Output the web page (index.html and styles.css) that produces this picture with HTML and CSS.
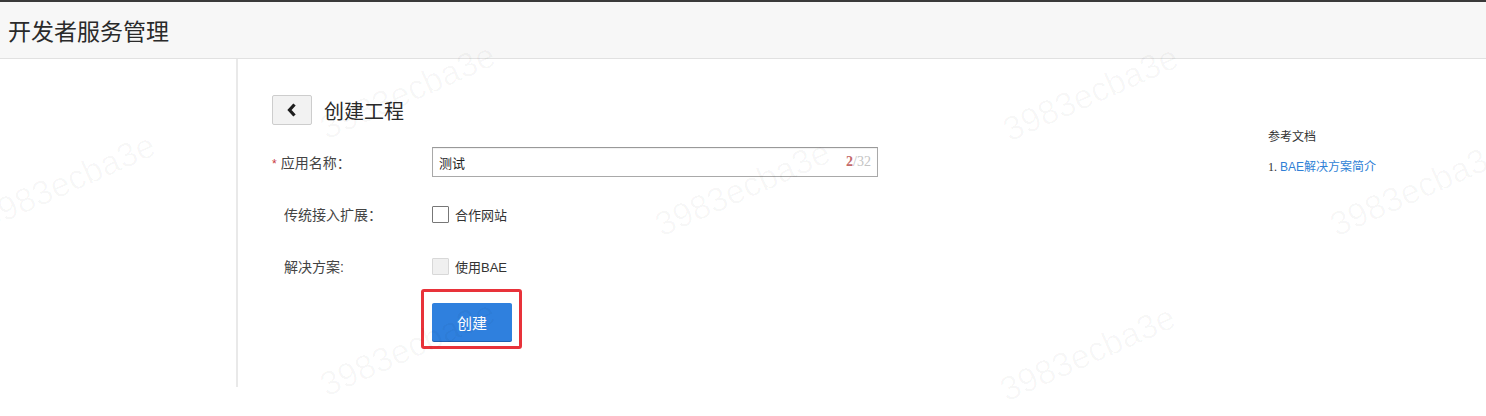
FILE: index.html
```html
<!DOCTYPE html>
<html>
<head>
  <meta charset="UTF-8">
  <title>开发者服务管理</title>
  <link rel="stylesheet" href="styles.css">
</head>
<body>
  <div class="topbar">
    <h1>开发者服务管理</h1>
  </div>

  <div class="main">
    <div class="sidebar"></div>

    <div class="content">
      <div class="page-title">
        <button class="back-btn" type="button">
          <svg width="10" height="14" viewBox="0 0 10 14"><polyline points="7.5,1.5 2.5,7 7.5,12.5" fill="none" stroke="#1e1e1e" stroke-width="3.2"/></svg>
        </button>
        <h2>创建工程</h2>
      </div>

      <div class="form">
        <div class="row">
          <label class="label"><span class="req">*</span>应用名称：</label>
          <div class="field">
            <div class="input">
              <span>测试</span>
              <span class="count"><em>2</em>/32</span>
            </div>
          </div>
        </div>

        <div class="row">
          <label class="label indent">传统接入扩展：</label>
          <div class="field">
            <span class="check"></span>
            <span class="check-text">合作网站</span>
          </div>
        </div>

        <div class="row">
          <label class="label indent">解决方案:</label>
          <div class="field">
            <span class="check disabled"></span>
            <span class="check-text">使用BAE</span>
          </div>
        </div>

        <div class="row">
          <div class="label"></div>
          <div class="field">
            <div class="highlight">
              <button class="submit" type="button">创建</button>
            </div>
          </div>
        </div>
      </div>
    </div>

    <div class="aside">
      <h3>参考文档</h3>
      <p>1. <a href="#">BAE解决方案简介</a></p>
    </div>
  </div>

  <div class="watermarks">
    <span class="wm" style="left:322px;top:110px">3983ecba3e</span>
    <span class="wm" style="left:1005px;top:112px">3983ecba3e</span>
    <span class="wm" style="left:-18px;top:200px">3983ecba3e</span>
    <span class="wm" style="left:657px;top:207px">3983ecba3e</span>
    <span class="wm" style="left:1332px;top:207px">3983ecba3e</span>
    <span class="wm" style="left:322px;top:367px">3983ecba3e</span>
    <span class="wm" style="left:1002px;top:372px">3983ecba3e</span>
  </div>
</body>
</html>
```

FILE: styles.css
```css
body {
  margin: 0;
  font-family: "Liberation Sans", "Noto Sans CJK SC", sans-serif;
  color: #333;
  background: #fff;
  position: relative;
  overflow: hidden;
  height: 416px;
}
.topbar {
  height: 56px;
  border-top: 2px solid #3a3a3a;
  border-bottom: 1px solid #e1e1e1;
  background: #f7f7f7;
  display: flex;
  align-items: center;
  padding-left: 8px;
}
.topbar h1 {
  margin: 0;
  font-size: 23px;
  font-weight: normal;
  color: #2a2a2a;
}
.main {
  display: flex;
  height: 328px;
}
.sidebar {
  width: 236px;
  border-right: 2px solid #e9e9e9;
}
.content {
  flex: 1;
  padding: 36px 0 0 34px;
}
.page-title {
  display: flex;
  align-items: center;
  height: 30px;
}
.back-btn {
  width: 40px;
  height: 30px;
  padding: 0;
  background: #f2f2f2;
  border: 1px solid #cdcdcd;
  border-radius: 2px;
  display: flex;
  align-items: center;
  justify-content: center;
}
.page-title h2 {
  margin: 0 0 0 12px;
  font-size: 20px;
  font-weight: normal;
  color: #2a2a2a;
}
.form {
  display: flex;
  flex-direction: column;
  gap: 22px;
  margin-top: 22px;
}
.row {
  display: flex;
  align-items: center;
  min-height: 30px;
}
.label {
  width: 160px;
  font-size: 14px;
  color: #444;
}
.label.indent {
  padding-left: 12px;
  width: 148px;
}
.req {
  color: #c9383d;
  font-size: 12px;
  margin-right: 4px;
}
.field {
  display: flex;
  align-items: center;
}
.input {
  width: 432px;
  height: 28px;
  border: 1px solid #a9a9a9;
  border-top-color: #999;
  box-shadow: inset 0 1px 1px rgba(0, 0, 0, 0.06);
  display: flex;
  align-items: center;
  justify-content: space-between;
  padding: 0 6px;
  font-size: 13px;
  color: #222;
}
.count {
  font-family: "Liberation Serif", serif;
  font-size: 14px;
  color: #c4c4c4;
}
.count em {
  font-style: normal;
  font-weight: bold;
  color: #c46a6a;
}
.check {
  width: 15px;
  height: 15px;
  border: 1px solid #777;
  border-radius: 1px;
  background: #fff;
}
.check.disabled {
  border-color: #d8d8d8;
  background: #f0f0f0;
}
.check-text {
  margin-left: 6px;
  font-size: 13px;
  color: #333;
}
.highlight {
  position: relative;
}
.highlight::after {
  content: "";
  position: absolute;
  left: -11px;
  right: -10px;
  top: -14px;
  bottom: -8px;
  border: 3px solid #e8323a;
  border-radius: 3px;
}
.submit {
  width: 80px;
  height: 38px;
  border: none;
  border-radius: 2px;
  background: #2f80de;
  color: #fff;
  font-family: "Liberation Sans", "Noto Sans CJK SC", sans-serif;
  font-size: 15px;
  box-shadow: 0 1px 0 #1f62b3;
}
.aside {
  width: 218px;
  padding-top: 68px;
  font-size: 12px;
}
.aside h3 {
  margin: 0;
  font-size: 12px;
  font-weight: normal;
  color: #333;
}
.aside p {
  margin: 13px 0 0;
  font-family: "Liberation Serif", "Noto Sans CJK SC", serif;
  color: #333;
}
.aside a {
  color: #2f7fd6;
  text-decoration: none;
  font-family: "Liberation Sans", "Noto Sans CJK SC", sans-serif;
}
.watermarks {
  position: absolute;
  inset: 0;
  pointer-events: none;
}
.wm {
  position: absolute;
  font-family: "Liberation Sans", sans-serif;
  font-size: 34px;
  color: rgba(0, 0, 0, 0.03);
  transform: rotate(-24deg);
  transform-origin: left center;
  white-space: nowrap;
}
```
